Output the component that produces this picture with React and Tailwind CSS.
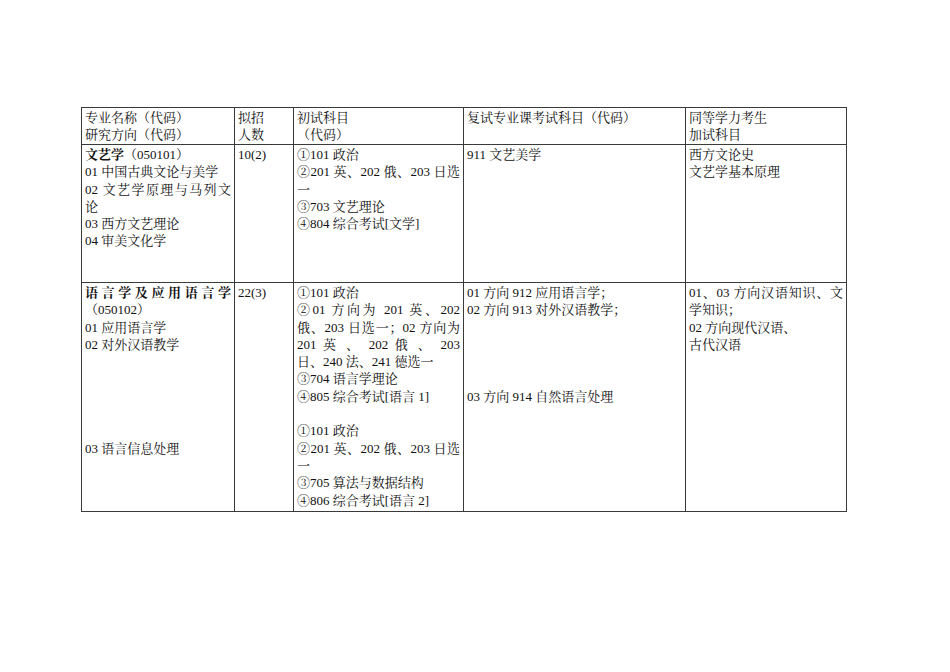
import React from "react";

const font = {
  fontFamily: '"Liberation Serif", "Noto Serif CJK SC", "Noto Sans CJK SC", serif',
};

function Line({ children, j, b }) {
  let cls = "whitespace-nowrap";
  if (j) cls = "text-justify [text-align-last:justify] whitespace-nowrap";
  if (b) cls += " font-bold";
  return <div className={cls}>{children || "\u00a0"}</div>;
}

function Cell({ children, w }) {
  return (
    <td className={"border border-[#3a3a3a] align-top px-[3px] pt-[1px] " + w}>
      {children}
    </td>
  );
}

export default function App() {
  return (
    <div className="min-h-screen bg-white pt-[107px] pl-[81px] text-[13px] leading-[17.3px] text-[#111]" style={font}>
      <table className="border-collapse table-fixed w-[765px]">
        <colgroup>
          <col className="w-[153px]" />
          <col className="w-[59px]" />
          <col className="w-[170px]" />
          <col className="w-[222px]" />
          <col className="w-[161px]" />
        </colgroup>
        <tbody>
          <tr className="h-[37px]">
            <Cell>
              <Line>专业名称（代码）</Line>
              <Line>研究方向（代码）</Line>
            </Cell>
            <Cell>
              <Line>拟招</Line>
              <Line>人数</Line>
            </Cell>
            <Cell>
              <Line>初试科目</Line>
              <Line>（代码）</Line>
            </Cell>
            <Cell>
              <Line>复试专业课考试科目（代码）</Line>
            </Cell>
            <Cell>
              <Line>同等学力考生</Line>
              <Line>加试科目</Line>
            </Cell>
          </tr>
          <tr className="h-[138px]">
            <Cell>
              <Line>
                <span className="font-bold">文艺学</span>（050101）
              </Line>
              <Line>01 中国古典文论与美学</Line>
              <Line j>02 文艺学原理与马列文</Line>
              <Line>论</Line>
              <Line>03 西方文艺理论</Line>
              <Line>04 审美文化学</Line>
            </Cell>
            <Cell>
              <Line>10(2)</Line>
            </Cell>
            <Cell>
              <Line>①101 政治</Line>
              <Line j>②201 英、202 俄、203 日选</Line>
              <Line>一</Line>
              <Line>③703 文艺理论</Line>
              <Line>④804 综合考试[文学]</Line>
            </Cell>
            <Cell>
              <Line>911 文艺美学</Line>
            </Cell>
            <Cell>
              <Line>西方文论史</Line>
              <Line>文艺学基本原理</Line>
            </Cell>
          </tr>
          <tr className="h-[229px]">
            <Cell>
              <Line j b>语言学及应用语言学</Line>
              <Line>（050102）</Line>
              <Line>01 应用语言学</Line>
              <Line>02 对外汉语教学</Line>
              <Line />
              <Line />
              <Line />
              <Line />
              <Line />
              <Line>03 语言信息处理</Line>
            </Cell>
            <Cell>
              <Line>22(3)</Line>
            </Cell>
            <Cell>
              <Line>①101 政治</Line>
              <Line j>②01 方向为 201 英、202</Line>
              <Line j>俄、203 日选一；02 方向为</Line>
              <Line j>201 英 、 202 俄 、 203</Line>
              <Line>日、240 法、241 德选一</Line>
              <Line>③704 语言学理论</Line>
              <Line>④805 综合考试[语言 1]</Line>
              <Line />
              <Line>①101 政治</Line>
              <Line j>②201 英、202 俄、203 日选</Line>
              <Line>一</Line>
              <Line>③705 算法与数据结构</Line>
              <Line>④806 综合考试[语言 2]</Line>
            </Cell>
            <Cell>
              <Line>01 方向 912 应用语言学；</Line>
              <Line>02 方向 913 对外汉语教学；</Line>
              <Line />
              <Line />
              <Line />
              <Line />
              <Line>03 方向 914 自然语言处理</Line>
            </Cell>
            <Cell>
              <Line j>01、03 方向汉语知识、文</Line>
              <Line>学知识；</Line>
              <Line>02 方向现代汉语、</Line>
              <Line>古代汉语</Line>
            </Cell>
          </tr>
        </tbody>
      </table>
    </div>
  );
}
